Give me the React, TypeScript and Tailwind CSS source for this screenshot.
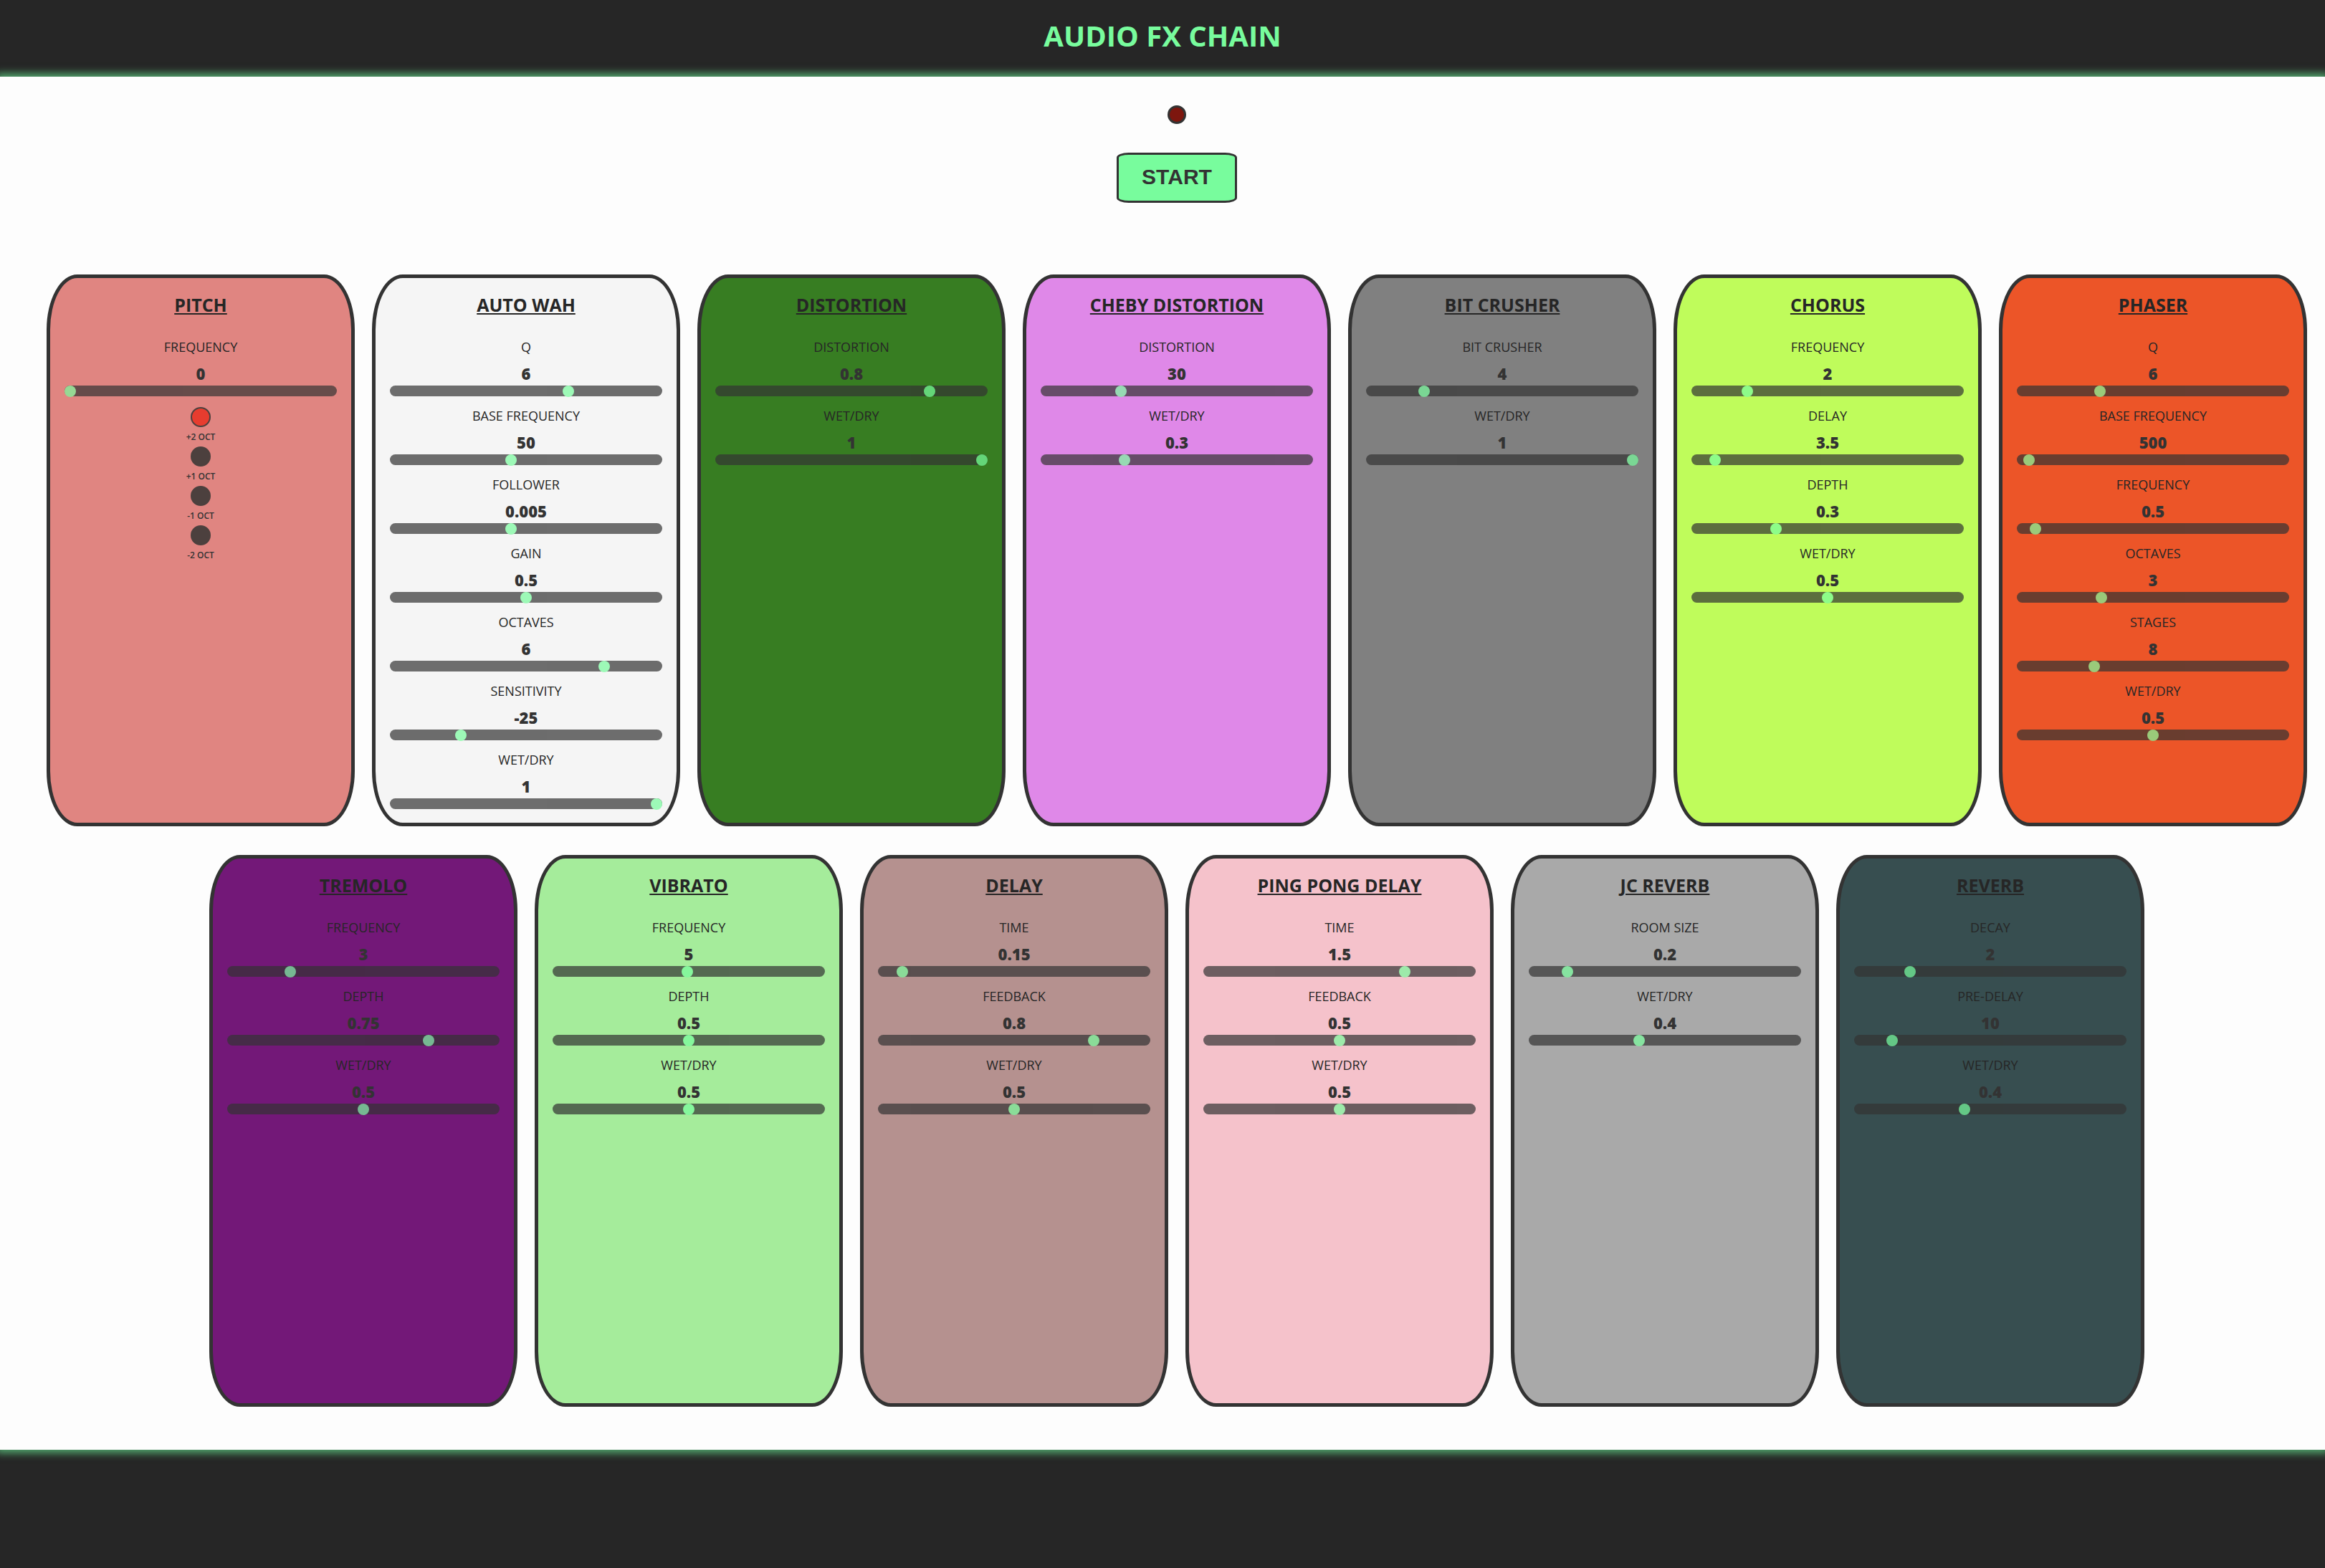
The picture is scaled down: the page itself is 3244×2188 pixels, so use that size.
import { useState } from "react";

type Control = { label: string; value: string; position: number };
type Effect = { name: string; color: string; controls: Control[]; octaves?: string[] };

const control = (label: string, value: string, position: number): Control => ({ label, value, position });

// `position` is how far along its track each slider's thumb rests, in percent.
const effects: Effect[] = [
  {
    name: "PITCH",
    color: "bg-[#e08581]",
    controls: [control("FREQUENCY", "0", 0)],
    octaves: ["+2 OCT", "+1 OCT", "-1 OCT", "-2 OCT"],
  },
  {
    name: "AUTO WAH",
    color: "bg-[#f5f5f5]",
    controls: [
      control("Q", "6", 66.3),
      control("BASE FREQUENCY", "50", 44.3),
      control("FOLLOWER", "0.005", 44.3),
      control("GAIN", "0.5", 50),
      control("OCTAVES", "6", 80),
      control("SENSITIVITY", "-25", 25),
      control("WET/DRY", "1", 100),
    ],
  },
  {
    name: "DISTORTION",
    color: "bg-[#377d22]",
    controls: [control("DISTORTION", "0.8", 80), control("WET/DRY", "1", 100)],
  },
  {
    name: "CHEBY DISTORTION",
    color: "bg-[#df88e8]",
    controls: [control("DISTORTION", "30", 28.5), control("WET/DRY", "0.3", 30)],
  },
  {
    name: "BIT CRUSHER",
    color: "bg-[#808080]",
    controls: [control("BIT CRUSHER", "4", 20), control("WET/DRY", "1", 100)],
  },
  {
    name: "CHORUS",
    color: "bg-[#bffc5b]",
    controls: [
      control("FREQUENCY", "2", 19.2),
      control("DELAY", "3.5", 7),
      control("DEPTH", "0.3", 30.3),
      control("WET/DRY", "0.5", 50),
    ],
  },
  {
    name: "PHASER",
    color: "bg-[#ec5528]",
    controls: [
      control("Q", "6", 29.7),
      control("BASE FREQUENCY", "500", 2.5),
      control("FREQUENCY", "0.5", 5),
      control("OCTAVES", "3", 30.2),
      control("STAGES", "8", 27.5),
      control("WET/DRY", "0.5", 50),
    ],
  },
  {
    name: "TREMOLO",
    color: "bg-[#731878]",
    controls: [
      control("FREQUENCY", "3", 22),
      control("DEPTH", "0.75", 75),
      control("WET/DRY", "0.5", 50),
    ],
  },
  {
    name: "VIBRATO",
    color: "bg-[#a5ec9b]",
    controls: [
      control("FREQUENCY", "5", 49.5),
      control("DEPTH", "0.5", 50),
      control("WET/DRY", "0.5", 50),
    ],
  },
  {
    name: "DELAY",
    color: "bg-[#b5918f]",
    controls: [
      control("TIME", "0.15", 7.1),
      control("FEEDBACK", "0.8", 80.6),
      control("WET/DRY", "0.5", 50),
    ],
  },
  {
    name: "PING PONG DELAY",
    color: "bg-[#f5c2cb]",
    controls: [
      control("TIME", "1.5", 75),
      control("FEEDBACK", "0.5", 50),
      control("WET/DRY", "0.5", 50),
    ],
  },
  {
    name: "JC REVERB",
    color: "bg-[#a9a9a9]",
    controls: [control("ROOM SIZE", "0.2", 12.5), control("WET/DRY", "0.4", 40)],
  },
  {
    name: "REVERB",
    color: "bg-[#374e50]",
    controls: [
      control("DECAY", "2", 19.2),
      control("PRE-DELAY", "10", 12.4),
      control("WET/DRY", "0.4", 40.1),
    ],
  },
];

function Slider({ id, label, value, position }: Control & { id: string }) {
  return (
    <div className="flex flex-col">
      <label htmlFor={id} className="text-center text-[18px] leading-6 text-[#262626]">
        {label}
      </label>
      <output htmlFor={id} className="mt-2.5 mb-0.5 text-center text-[22px] leading-[30px] font-extrabold text-[#333333]">
        {value}
      </output>
      <input
        id={id}
        type="range"
        min={0}
        max={100}
        step="any"
        defaultValue={position}
        className="block h-[15px] w-full cursor-pointer appearance-none rounded-full bg-[#333333] opacity-70 outline-none [&::-webkit-slider-thumb]:size-4 [&::-webkit-slider-thumb]:appearance-none [&::-webkit-slider-thumb]:rounded-full [&::-webkit-slider-thumb]:bg-[#78fc9d]"
      />
    </div>
  );
}

function OctavePicker({ options }: { options: string[] }) {
  return (
    <fieldset className="flex flex-col items-center gap-[5px]">
      {options.map((option, index) => (
        <label key={option} className="flex flex-col items-center gap-1.5 text-[12px] leading-4 font-semibold text-[#333333]">
          <input
            type="radio"
            name="octave"
            defaultChecked={index === 0}
            className="block size-7 cursor-pointer appearance-none rounded-full border-2 border-[#4c403e] bg-[#4c403e] checked:bg-[#e73c2f]"
          />
          {option}
        </label>
      ))}
    </fieldset>
  );
}

function EffectCard({ effect }: { effect: Effect }) {
  const slug = effect.name.toLowerCase().replaceAll(" ", "-");
  return (
    <li className={`flex min-h-[770px] w-[430px] flex-col rounded-[10%] border-5 border-[#333333] px-5 pt-5 ${effect.color}`}>
      <h2 className="mb-[30px] text-center text-[25px] leading-[34px] font-bold text-[#262626] underline">
        {effect.name}
      </h2>
      <div className="flex flex-col gap-[15px]">
        {effect.controls.map((item) => (
          <Slider key={item.label} id={`${slug}-${item.label.toLowerCase()}`} {...item} />
        ))}
        {effect.octaves && <OctavePicker options={effect.octaves} />}
      </div>
    </li>
  );
}

export default function App() {
  const [running, setRunning] = useState(false);

  return (
    <div className="flex min-h-screen flex-col bg-[#262626] font-['Open_Sans',sans-serif]">
      <header className="flex h-[107px] items-center justify-center pb-2">
        <h1 className="text-[40px] leading-[54px] font-bold text-[#78fc9d]">AUDIO FX CHAIN</h1>
      </header>

      <main className="relative flex flex-col items-center bg-[#fdfdfd] pt-10 pb-15 pl-10 shadow-[0_0_10px_5px_#51a36c]">
        <div
          role="status"
          aria-label={running ? "On" : "Off"}
          className={`size-[26px] rounded-full border-3 border-[#333333] ${running ? "bg-[#e73c2f]" : "bg-[#7d160e]"}`}
        />
        <button
          type="button"
          onClick={() => setRunning(!running)}
          className="mt-10 h-[70px] w-[168px] cursor-pointer rounded-[10%] border-3 border-[#333333] bg-[#78fc9d] pb-1 font-['Liberation_Sans',sans-serif] text-[30px] font-bold text-[#333333]"
        >
          START
        </button>
        <ul className="mt-25 flex flex-wrap justify-center gap-x-6 gap-y-10">
          {effects.map((effect) => (
            <EffectCard key={effect.name} effect={effect} />
          ))}
        </ul>
      </main>

      <footer className="min-h-[165px] flex-1" />
    </div>
  );
}
